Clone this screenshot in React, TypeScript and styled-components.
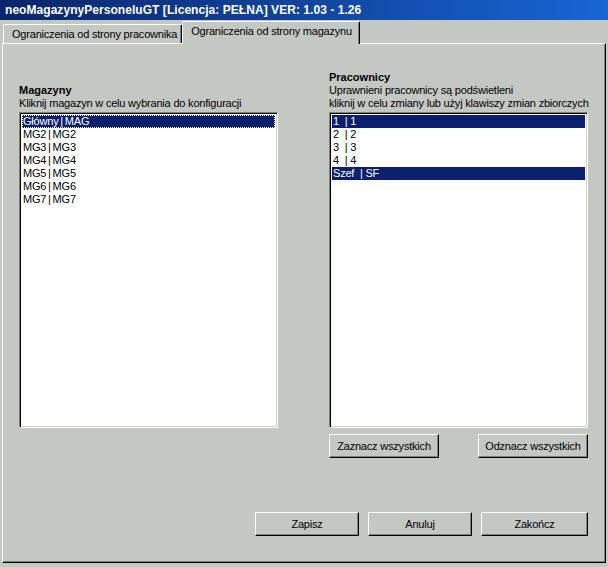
import React, { useState } from "react";
import styled, { createGlobalStyle } from "styled-components";

const warehouses = ["Główny | MAG", "MG2 | MG2", "MG3 | MG3", "MG4 | MG4", "MG5 | MG5", "MG6 | MG6", "MG7 | MG7"];

const workers = [
  { label: "1  | 1", allowed: true },
  { label: "2  | 2", allowed: false },
  { label: "3  | 3", allowed: false },
  { label: "4  | 4", allowed: false },
  { label: "Szef  | SF", allowed: true },
];

function App() {
  const [tab, setTab] = useState(1);
  const [current, setCurrent] = useState(0);

  return (
    <S.Window>
      <GlobalStyle />
      <S.TitleBar>neoMagazynyPersoneluGT [Licencja: PEŁNA] VER: 1.03 - 1.26</S.TitleBar>
      <S.Tabs>
        <S.Tab $active={tab === 0} onClick={() => setTab(0)}>
          Ograniczenia od strony pracownika
        </S.Tab>
        <S.Tab $active={tab === 1} onClick={() => setTab(1)}>
          Ograniczenia od strony magazynu
        </S.Tab>
      </S.Tabs>
      <S.Panel>
        <S.Columns>
          <S.Header>
            <S.Heading>Magazyny</S.Heading>
            <S.Hint>Kliknij magazyn w celu wybrania do konfiguracji</S.Hint>
          </S.Header>
          <S.Header>
            <S.Heading>Pracownicy</S.Heading>
            <S.Hint>Uprawnieni pracownicy są podświetleni</S.Hint>
            <S.Hint>kliknij w celu zmiany lub użyj klawiszy zmian zbiorczych</S.Hint>
          </S.Header>
          <S.ListBox>
            {warehouses.map((w, i) => (
              <S.Item
                key={w}
                $spacing={-1}
                $selected={i === current}
                $focused={i === current}
                onClick={() => setCurrent(i)}
              >
                {w}
              </S.Item>
            ))}
          </S.ListBox>
          <S.ListBox>
            {workers.map((w) => (
              <S.Item key={w.label} $spacing={0} $selected={w.allowed}>
                {w.label}
              </S.Item>
            ))}
          </S.ListBox>
          <div />
          <S.ListActions>
            <S.Button $width={110}>Zaznacz wszystkich</S.Button>
            <S.Button $width={110}>Odznacz wszystkich</S.Button>
          </S.ListActions>
        </S.Columns>
        <S.Footer>
          <S.Button $width={104}>Zapisz</S.Button>
          <S.Button $width={104}>Anuluj</S.Button>
          <S.Button $width={107}>Zakończ</S.Button>
        </S.Footer>
      </S.Panel>
    </S.Window>
  );
}

const GlobalStyle = createGlobalStyle`
  html, body {
    margin: 0;
    padding: 0;
    background: #c4c8c3;
  }
  body {
    font-family: "Liberation Sans", Arial, sans-serif;
    font-size: 11px;
    letter-spacing: -0.2px;
    color: #000;
  }
`;

const S = {
  Window: styled.div`
    width: 608px;
    height: 567px;
    display: flex;
    flex-direction: column;
    background: #c4c8c3;
    box-sizing: border-box;
    overflow: hidden;
  `,
  TitleBar: styled.div`
    height: 20px;
    line-height: 20px;
    padding-left: 5px;
    background: linear-gradient(90deg, #0a246a 0%, #1766d4 100%);
    color: #fff;
    font-weight: bold;
    font-size: 12px;
    letter-spacing: 0.05px;
    white-space: nowrap;
  `,
  Tabs: styled.div`
    display: flex;
    align-items: flex-end;
    height: 23px;
    padding-left: 3px;
    position: relative;
    z-index: 1;
  `,
  Tab: styled.div<{ $active: boolean }>`
    height: ${({ $active }) => ($active ? 23 : 19)}px;
    margin-bottom: ${({ $active }) => ($active ? -1 : 0)}px;
    padding: 0 ${({ $active }) => ($active ? 7 : 4)}px 0 8px;
    line-height: 19px;
    box-sizing: border-box;
    background: #c4c8c3;
    border-top: 1px solid #fff;
    border-left: 1px solid #fff;
    border-right: 1px solid #000;
    border-top-left-radius: 2px;
    border-top-right-radius: 2px;
    box-shadow: inset -1px 0 #808080;
    white-space: nowrap;
    cursor: default;
  `,
  Panel: styled.div`
    flex: 1;
    margin: 0 2px 4px 2px;
    border-top: 1px solid #fff;
    border-left: 1px solid #fff;
    border-right: 1px solid #000;
    border-bottom: 1px solid #000;
    box-shadow: inset -1px -1px #808080;
    padding: 0 17px 0 16px;
    display: flex;
    flex-direction: column;
  `,
  Columns: styled.div`
    display: grid;
    grid-template-columns: 259px 259px;
    grid-template-rows: 68px 316px auto;
    column-gap: 51px;
  `,
  Header: styled.div`
    align-self: end;
    padding-bottom: 2px;
  `,
  Heading: styled.div`
    font-weight: bold;
    font-size: 11px;
    line-height: 14px;
    letter-spacing: 0;
  `,
  Hint: styled.div`
    line-height: 13px;
    white-space: nowrap;
  `,
  ListBox: styled.div`
    background: #fff;
    box-sizing: border-box;
    border-top: 1px solid #808080;
    border-left: 1px solid #808080;
    border-right: 1px solid #fff;
    border-bottom: 1px solid #fff;
    box-shadow: inset 1px 1px #000, inset -1px -1px #d4d0c8;
    padding: 2px;
    overflow: hidden;
  `,
  Item: styled.div<{ $selected?: boolean; $focused?: boolean; $spacing: number }>`
    height: 13px;
    line-height: 13px;
    padding-left: 1px;
    white-space: pre;
    word-spacing: ${({ $spacing }) => $spacing}px;
    box-sizing: border-box;
    background: ${({ $selected }) => ($selected ? "#0a1f6e" : "transparent")};
    color: ${({ $selected }) => ($selected ? "#fff" : "#000")};
    outline: ${({ $focused }) => ($focused ? "1px dotted #fff" : "none")};
    outline-offset: -1px;
    cursor: default;
  `,
  ListActions: styled.div`
    display: flex;
    justify-content: space-between;
    margin-top: 6px;
  `,
  Button: styled.button<{ $width: number }>`
    width: ${({ $width }) => $width}px;
    height: 24px;
    padding: 0;
    font-family: "Liberation Sans", Arial, sans-serif;
    font-size: 11px;
    letter-spacing: -0.2px;
    color: #000;
    background: #c4c8c3;
    border-top: 1px solid #fff;
    border-left: 1px solid #fff;
    border-right: 1px solid #000;
    border-bottom: 1px solid #000;
    box-shadow: inset -1px -1px #808080;
    border-radius: 0;
  `,
  Footer: styled.div`
    display: flex;
    justify-content: flex-end;
    gap: 9px;
    margin-top: auto;
    margin-bottom: 26px;
  `,
};

export default App;
